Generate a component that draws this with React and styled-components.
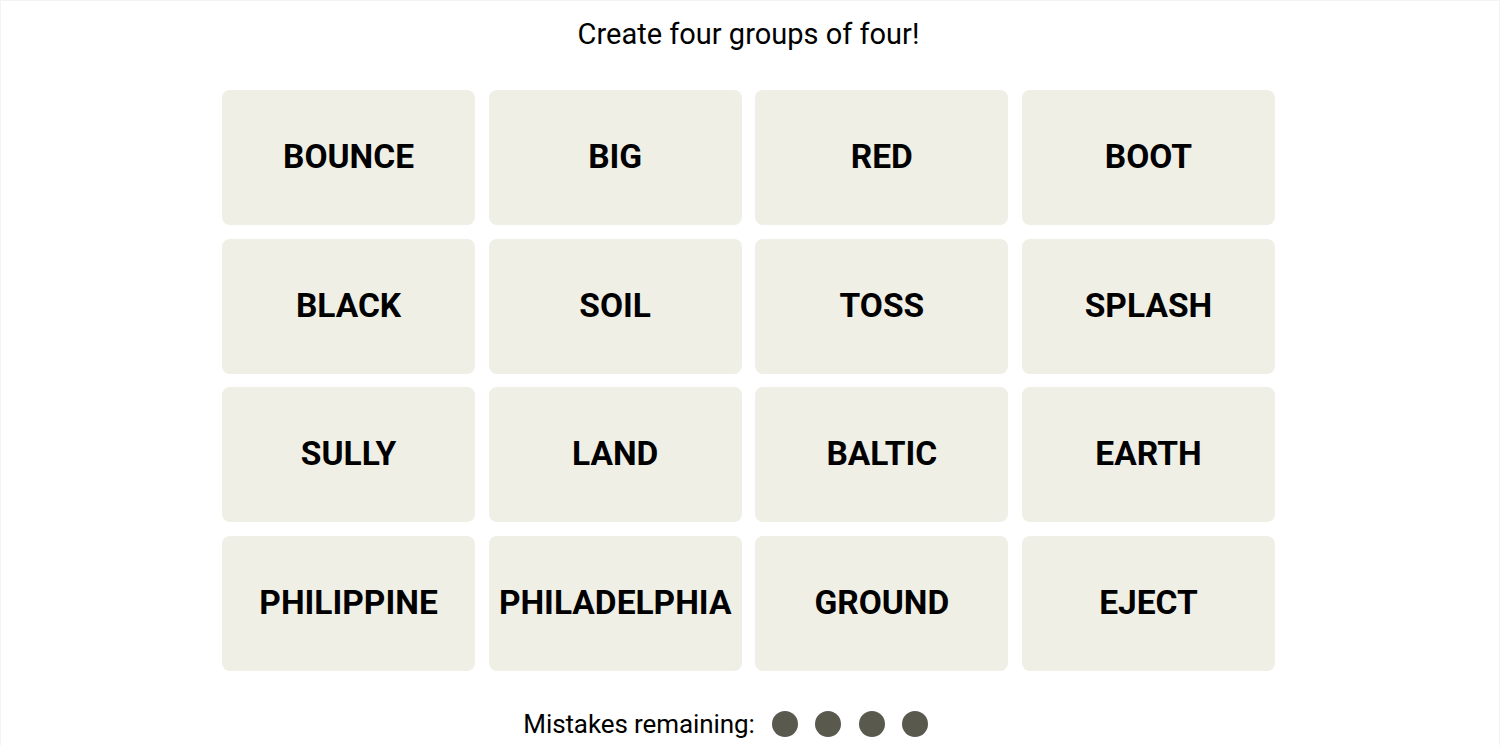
import React from 'react'
import styled, { createGlobalStyle } from 'styled-components'

const GlobalStyle = createGlobalStyle`
  html, body {
    margin: 0;
    padding: 0;
    background: #fff;
  }
  body {
    font-family: Roboto, "Liberation Sans", Arial, sans-serif;
    color: #000;
  }
`

const Page = styled.div`
  box-sizing: border-box;
  display: flex;
  flex-direction: column;
  align-items: center;
  width: 100vw;
  height: 745px;
  padding: 17px 3px 0 0;
  border: 1px solid #f3f3f3;
  border-bottom: none;
  overflow: hidden;
`

const Title = styled.h1`
  margin: 0;
  font-size: 29px;
  line-height: 32px;
  font-weight: 400;
`

const Board = styled.div`
  display: grid;
  grid-template-columns: repeat(4, 1fr);
  grid-auto-rows: 135px;
  gap: 13.6px 13.6px;
  width: 1053px;
  margin-top: 40px;
`

const Tile = styled.button`
  display: flex;
  align-items: center;
  justify-content: center;
  border: none;
  border-radius: 8px;
  background: #efefe6;
  color: #000;
  font-family: Roboto, "Liberation Sans", Arial, sans-serif;
  font-size: 33.5px;
  font-weight: 700;
  text-transform: uppercase;
  padding: 0 0 2px;
  cursor: pointer;
`

const Mistakes = styled.div`
  display: flex;
  align-items: center;
  margin-top: 37px;
  font-size: 26px;
  line-height: 32px;
  letter-spacing: -0.1px;
`

const DotTrack = styled.span`
  display: flex;
  align-items: center;
  gap: 17.5px;
  width: 202px;
  margin-left: 17px;
`

const Dot = styled.span`
  width: 26px;
  height: 26px;
  border-radius: 50%;
  background: ${props => (props.used ? '#efefe6' : '#5a594e')};
`

const words = [
  'Bounce', 'Big', 'Red', 'Boot',
  'Black', 'Soil', 'Toss', 'Splash',
  'Sully', 'Land', 'Baltic', 'Earth',
  'Philippine', 'Philadelphia', 'Ground', 'Eject'
]

const App = () => {
  const mistakesLeft = 4
  return (
    <>
      <GlobalStyle />
      <Page>
        <Title>Create four groups of four!</Title>
        <Board>
          {words.map(w => <Tile key={w}>{w}</Tile>)}
        </Board>
        <Mistakes>
          Mistakes remaining:
          <DotTrack>
            {[0, 1, 2, 3].map(i => <Dot key={i} used={i >= mistakesLeft} />)}
          </DotTrack>
        </Mistakes>
      </Page>
    </>
  )
}

export default App
